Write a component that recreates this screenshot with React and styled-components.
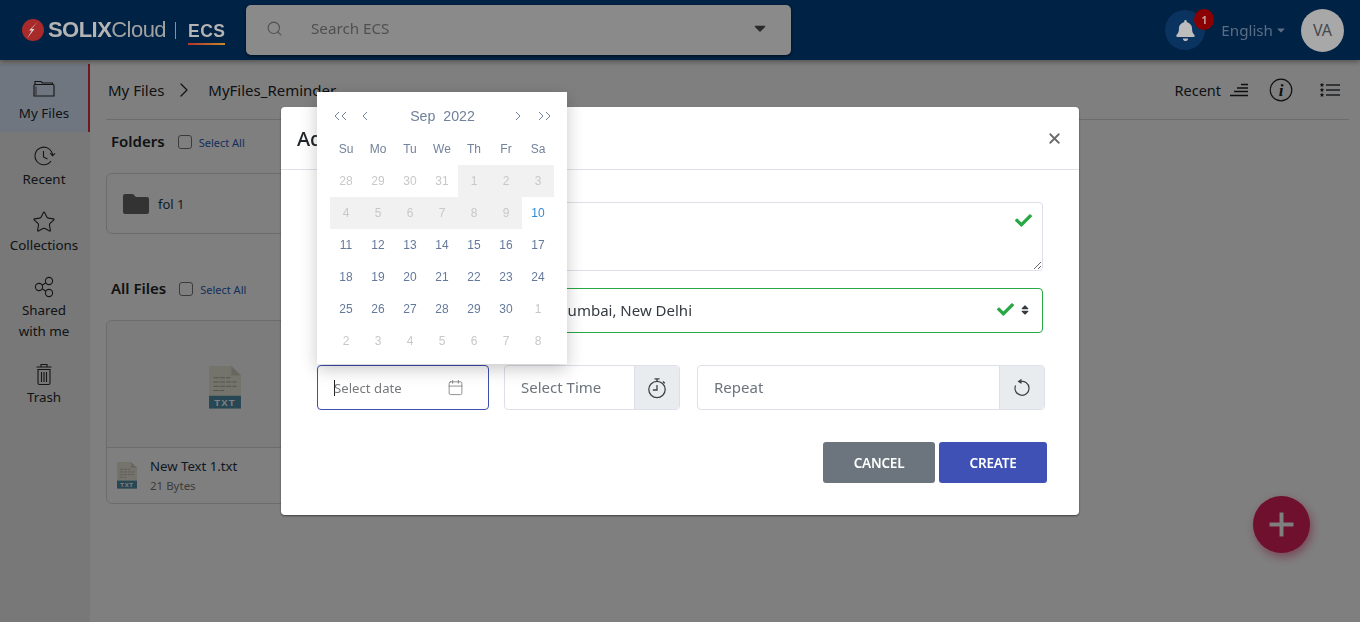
import React from 'react';
import styled, { createGlobalStyle } from 'styled-components';
import { Star, Search, ChevronRight, Calendar, Plus, X } from 'lucide-react';
import { FaBell, FaCheck, FaSort, FaCaretDown } from 'react-icons/fa';

const UI_FONT = `'Noto Sans', 'Open Sans', sans-serif`;

const GlobalStyle = createGlobalStyle`
  html, body { margin: 0; padding: 0; height: 100%; overflow: hidden; }
  body { font-family: ${UI_FONT}; background: #fff; color: #212529; }
  * { box-sizing: border-box; }
`;

const Page = styled.div`
  width: 1360px;
  height: 622px;
  overflow: hidden;
`;

/* header */
const TopBar = styled.header`
  position: relative;
  z-index: 30;
  height: 60px;
  background: #002244;
  display: flex;
  align-items: center;
  box-shadow: 0 2px 5px rgba(0, 0, 0, 0.35);
`;

const Logo = styled.div`
  width: 246px;
  padding-left: 22px;
  display: flex;
  align-items: center;
  color: #b4b4b4;
  flex: none;
`;

const LogoName = styled.span`
  margin-left: 4px;
  font-family: 'Liberation Sans', sans-serif;
  font-size: 22px;
  letter-spacing: -0.55px;
  font-weight: 700;
`;

const LogoCloud = styled.span`
  font-weight: 400;
  color: #a2a2a2;
`;

const LogoDivider = styled.span`
  width: 1px;
  height: 17px;
  margin: 0 12px 0 9px;
  background: #8b8f96;
`;

const LogoProduct = styled.span`
  font-family: 'Liberation Sans', sans-serif;
  font-size: 17.5px;
  font-weight: 700;
  letter-spacing: 0.5px;
  padding: 5px 0 1px;
  border-bottom: 2px solid;
  border-image: linear-gradient(90deg, #b5322a, #c98a2a) 1;
`;

const SearchBox = styled.div`
  width: 545px;
  height: 50px;
  background: #8a8a8a;
  border-radius: 5px;
  box-shadow: 0 1px 3px rgba(0, 0, 0, 0.6);
  display: flex;
  align-items: center;
  padding: 0 22px 4px 20px;
  color: #505050;
  font-size: 15.2px;
`;

const SearchText = styled.span`
  margin-left: 28px;
  flex: 1;
`;

const HeaderRight = styled.div`
  margin-left: auto;
  padding-right: 16px;
  display: flex;
  align-items: center;
`;

const BellWrap = styled.div`
  position: relative;
  width: 40px;
  height: 40px;
  border-radius: 50%;
  background: #0b3360;
  color: #bdbdbd;
  display: flex;
  align-items: center;
  justify-content: center;
`;

const Badge = styled.span`
  position: absolute;
  top: -1px;
  right: -9px;
  width: 20px;
  height: 21px;
  border-radius: 50%;
  background: #8b0000;
  color: #c9a0a0;
  font-size: 10px;
  font-weight: 700;
  display: flex;
  align-items: center;
  justify-content: center;
`;

const Lang = styled.div`
  margin: 0 14px 0 16px;
  display: flex;
  align-items: center;
  gap: 2px;
  color: #5b6d85;
  font-size: 15.2px;
`;

const Avatar = styled.div`
  width: 43px;
  height: 43px;
  border-radius: 50%;
  background: #a8a8a8;
  color: #45494e;
  font-size: 16px;
  display: flex;
  align-items: center;
  justify-content: center;
`;

/* page behind the dialog */
const Content = styled.div`
  display: flex;
  height: 562px;
`;

const Sidebar = styled.nav`
  width: 90px;
  flex: none;
  background: #f0f0f0;
  padding-top: 4px;
`;

const SideItem = styled.div`
  height: ${p => p.$height || 66}px;
  padding-top: ${p => p.$pad || 12}px;
  display: flex;
  flex-direction: column;
  align-items: center;
  text-align: center;
  font-size: 13.4px;
  line-height: 21px;
  color: #24292e;
  background: ${p => (p.$active ? '#dfecff' : 'transparent')};
  border-right: 2px solid ${p => (p.$active ? '#e03038' : 'transparent')};
  svg { margin-bottom: ${p => (p.$active ? 3 : 1)}px; flex: none; }
`;

const Main = styled.main`
  flex: 1;
  padding: 0 11px 0 16px;
`;

const CrumbBar = styled.div`
  height: 60px;
  border-bottom: 1px solid #d8d8d8;
  display: flex;
  align-items: center;
  padding: 0 9px 0 2px;
  font-size: 15px;
  color: #212529;
`;

const CrumbLink = styled.span`
  margin-right: 8px;
`;

const CrumbTail = styled.span`
  margin-left: 12px;
`;

const BarTools = styled.div`
  margin-left: auto;
  display: flex;
  align-items: center;
  font-size: 14.5px;
`;

const SectionHead = styled.div`
  display: flex;
  align-items: center;
  padding-left: 5px;
  height: 22px;
  margin-top: ${p => p.$top}px;
  font-size: 15px;
  font-weight: 600;
`;

const Check = styled.span`
  width: 14px;
  height: 14px;
  margin: 2px 7px 0 ${p => p.$left}px;
  background: #fff;
  border: 1px solid #767676;
  border-radius: 3px;
`;

const SelectAll = styled.span`
  margin-top: 2px;
  font-size: 11px;
  font-weight: 400;
  color: #2a5db8;
`;

const Card = styled.div`
  width: 260px;
  margin-top: ${p => p.$top}px;
  background: #fff;
  border: 1px solid #d8d8d8;
  border-radius: 6px;
`;

const FolderCard = styled(Card)`
  height: 61px;
  display: flex;
  align-items: center;
  padding-left: 16px;
  gap: 9px;
  font-size: 13px;
  color: #213a52;
`;

const Thumb = styled.div`
  height: 127px;
  background: #f8f8f8;
  border-bottom: 1px solid #d8d8d8;
  padding: 45px 0 0 102px;
  border-radius: 6px 6px 0 0;
`;

const FileRow = styled.div`
  height: 55px;
  display: flex;
  align-items: center;
  padding-left: 10px;
  gap: 13px;
`;

const FileName = styled.div`
  font-size: 13.2px;
  color: #1f3347;
  line-height: 20px;
`;

const FileSize = styled.div`
  font-size: 11.5px;
  color: #777;
  line-height: 20px;
`;

const Fab = styled.div`
  position: fixed;
  left: 1253px;
  top: 496px;
  width: 57px;
  height: 57px;
  border-radius: 50%;
  background: #e0205f;
  color: #fff;
  display: flex;
  align-items: center;
  justify-content: center;
  box-shadow: 2px 4px 10px rgba(224, 32, 95, 0.5);
`;

/* dialog */
const Backdrop = styled.div`
  position: fixed;
  inset: 0;
  z-index: 20;
  background: rgba(0, 0, 0, 0.5);
  padding: 107px 0 0 281px;
`;

const Modal = styled.div`
  width: 798px;
  height: 408px;
  background: #fff;
  border-radius: 4px;
  box-shadow: 0 1px 2px rgba(0, 0, 0, 0.5);
`;

const ModalHead = styled.div`
  height: 63px;
  border-bottom: 1px solid #dee2e6;
  display: flex;
  align-items: center;
  justify-content: space-between;
  padding: 0 16px;
  font-size: 20px;
  font-weight: 500;
  color: #212529;
`;

const CloseBtn = styled.span`
  color: #6a6a6a;
  display: flex;
`;

const ModalBody = styled.div`
  position: relative;
  padding: 32px 32px 32px 36px;
`;

const NoteWrap = styled.div`
  position: relative;
  margin-right: 4px;
  height: 69px;
`;

const Note = styled.textarea`
  display: block;
  width: 100%;
  height: 69px;
  border: 1px solid #dfdfec;
  border-radius: 4px;
  outline: none;
  resize: vertical;
`;

const OkMark = styled.span`
  position: absolute;
  right: ${p => p.$right}px;
  top: ${p => p.$top}px;
  color: #28a745;
  display: flex;
`;

const ZoneSelect = styled.div`
  position: relative;
  margin: 17px 4px 0 0;
  height: 45px;
  border: 1px solid #28a745;
  border-radius: 4px;
  padding: 0 0 2px 236px;
  display: flex;
  align-items: center;
  font-size: 15px;
  color: #343a40;
`;

const SortMark = styled.span`
  position: absolute;
  right: 11px;
  top: 15px;
  display: flex;
  color: #343a40;
`;

const PickerRow = styled.div`
  display: flex;
  margin: 32px 2px 0 0;
  height: 45px;
`;

const DateField = styled.div`
  position: relative;
  width: 172px;
  flex: none;
  border: 1px solid #3f4fae;
  border-radius: 4px;
  display: flex;
  align-items: center;
  justify-content: space-between;
  padding: 0 24px 0 16px;
  font-size: 13.2px;
  color: #77797c;
`;

const Caret = styled.span`
  width: 1px;
  height: 16px;
  margin-right: -1px;
  background: #222;
`;

const DateText = styled.span`
  flex: 1;
`;

const InputGroup = styled.div`
  display: flex;
  flex: ${p => (p.$grow ? '1' : 'none')};
  width: ${p => (p.$grow ? 'auto' : '176px')};
  margin-left: ${p => p.$left}px;
  border: 1px solid #dfdfec;
  border-radius: 4px;
  overflow: hidden;
`;

const GroupText = styled.div`
  flex: 1;
  padding: 0 0 2px 16px;
  display: flex;
  align-items: center;
  font-size: 15px;
  color: #6c757d;
`;

const GroupAddon = styled.div`
  width: 45px;
  background: #e9ecef;
  border-left: 1px solid #dfdfec;
  color: #495057;
  display: flex;
  align-items: center;
  justify-content: center;
`;

const Actions = styled.div`
  display: flex;
  justify-content: flex-end;
  gap: 4px;
  margin-top: 32px;
`;

const ActionBtn = styled.div`
  width: ${p => p.$width}px;
  height: 41px;
  border-radius: 3px;
  background: ${p => p.$bg};
  color: #fff;
  font-size: 13.5px;
  font-weight: 600;
  letter-spacing: -0.2px;
  display: flex;
  align-items: center;
  justify-content: center;
`;

/* date popup */
const Popup = styled.div`
  position: absolute;
  left: -1px;
  bottom: 45px;
  width: 250px;
  height: 272px;
  background: #fff;
  padding: 0 13px;
  font-family: 'Liberation Sans', Arial, sans-serif;
  box-shadow: 0 5px 16px rgba(0, 0, 0, 0.22);
`;

const PopupNav = styled.div`
  height: 48px;
  display: flex;
  align-items: center;
  padding: 0 3px;
  color: #6f819b;
`;

const NavGroup = styled.div`
  display: flex;
  align-items: center;
  gap: ${p => p.$gap}px;
`;

const MonthLabel = styled.div`
  flex: 1;
  text-align: center;
  white-space: pre;
  font-size: 14.2px;
  padding-left: 2px;
`;

const WeekRow = styled.div`
  display: grid;
  grid-template-columns: repeat(7, 32px);
  height: 18px;
  margin-bottom: 7px;
  align-items: center;
  text-align: center;
  font-size: 12px;
  color: #72839c;
`;

const DayGrid = styled.div`
  display: grid;
  grid-template-columns: repeat(7, 32px);
  grid-auto-rows: 32px;
`;

const Day = styled.div`
  display: flex;
  align-items: center;
  justify-content: center;
  font-size: 12px;
  color: ${p => (p.$kind === 'today' ? '#2b8be0' : p.$kind === 'off' || p.$kind === 'past' ? '#c8c8c8' : '#64799a')};
  background: ${p => (p.$kind === 'past' ? '#f1f1f1' : 'transparent')};
`;

const Chevrons = ({ dir, count }) => (
  <svg width={count === 2 ? 14 : 8} height="12" viewBox={`0 0 ${count === 2 ? 14 : 8} 12`} fill="none" stroke="currentColor" strokeWidth="1">
    {[...Array(count)].map((_, i) => (
      <path key={i} d={dir === 'left' ? `M${6 + i * 7} 2 L${2 + i * 7} 6 L${6 + i * 7} 10` : `M${2 + i * 7} 2 L${6 + i * 7} 6 L${2 + i * 7} 10`} />
    ))}
  </svg>
);

const FileIcon = ({ size }) => (
  <svg width={size} height={size * 1.33} viewBox="0 0 30 40">
    <path d="M0 0H21L30 9V40H0Z" fill="#e8e8d8" />
    <path d="M21 0L30 9H21Z" fill="#cfcfc0" />
    <path d="M4 11H20M4 15H26M4 19H26M4 23H14" stroke="#a8a89a" strokeWidth="1" strokeDasharray="5 1" />
    <rect y="28" width="30" height="12" fill="#4f8fa8" />
    <text x="15" y="37.5" fontSize="9" fontWeight="700" fontFamily="'Liberation Sans', sans-serif" letterSpacing="1" fill="#fff" textAnchor="middle">TXT</text>
  </svg>
);

const FolderLine = () => (
  <svg width="24" height="24" viewBox="0 0 24 24" fill="none" stroke="#2b2b2b" strokeWidth="1.1">
    <path d="M3 9V5.5H9L10.5 7H20.5V9" />
    <path d="M2 9.5Q2 8.5 3 8.5H21Q22 8.5 22 9.5V20H2Z" />
    <path d="M4 19V10.5" strokeWidth="0.8" />
  </svg>
);

const ClockArrow = () => (
  <svg width="24" height="24" viewBox="0 0 24 24" fill="none" stroke="#2b2b2b" strokeWidth="1.1">
    <path d="M19 17A8.8 8.8 0 1 1 20.6 11.5" />
    <path d="M18.2 9.2L20.6 11.8L23 9.4" />
    <path d="M11.5 7V13L15.5 15" />
  </svg>
);

const ShareNodes = () => (
  <svg width="24" height="24" viewBox="0 0 24 24" fill="none" stroke="#2b2b2b" strokeWidth="1.1">
    <circle cx="7" cy="12" r="3.6" />
    <circle cx="17" cy="6" r="3.6" />
    <circle cx="17" cy="18" r="3.6" />
    <path d="M10 10.2L14 7.8M10 13.8L14 16.2" />
  </svg>
);

const TrashCan = () => (
  <svg width="24" height="24" viewBox="0 0 24 24" fill="none" stroke="#2b2b2b" strokeWidth="1.1">
    <path d="M4.5 5H19.5M9 5V2.5H15V5" />
    <path d="M6 7.5H18V21Q18 22.5 16.5 22.5H7.5Q6 22.5 6 21Z" />
    <path d="M9.5 10V20M12 10V20M14.5 10V20" />
  </svg>
);

const Stopwatch = () => (
  <svg width="22" height="22" viewBox="0 0 22 22" fill="none" stroke="#3d4246" strokeWidth="1.3">
    <circle cx="11" cy="12.5" r="8.2" />
    <path d="M8.5 1.8H13.5M11 2V4.3M17 4.5L18.8 6.3" />
    <path d="M11 8V13H6.8" />
  </svg>
);

const ResetArrow = () => (
  <svg width="20" height="20" viewBox="0 0 20 20" fill="none" stroke="#3d4246" strokeWidth="1.2">
    <path d="M8 3.6A7 7 0 1 1 3.6 7.5" />
    <path d="M9.5 0.8V6L5.5 3.4Z" fill="#3d4246" stroke="none" />
  </svg>
);

const StairsIcon = () => (
  <svg width="20" height="14" viewBox="0 0 20 14" fill="none" stroke="#1d1f22" strokeWidth="1.5" style={{ marginLeft: 8 }}>
    <path d="M12 1.5H19M8 5H19M5 8.5H19M1 12.5H19" />
  </svg>
);

const InfoIcon = () => (
  <svg width="24" height="24" viewBox="0 0 24 24" fill="none" style={{ marginLeft: 20 }}>
    <circle cx="12" cy="12" r="10.8" stroke="#1d1f22" strokeWidth="1.2" />
    <text x="12" y="18" fontSize="17" fontWeight="700" fontStyle="italic" fontFamily="'Liberation Serif', serif" fill="#1d1f22" textAnchor="middle">i</text>
  </svg>
);

const StarList = () => (
  <svg width="20" height="16" viewBox="0 0 20 16" style={{ marginLeft: 27 }}>
    <path d="M6 3H20M6 8H20M6 13H20" stroke="#3a3c40" strokeWidth="1.4" />
    {[3, 8, 13].map(y => (
      <path key={y} d={`M2 ${y - 2.4}L2.7 ${y - 0.8}L4.2 ${y - 0.7}L3 ${y + 0.4}L3.4 ${y + 2}L2 ${y + 1.1}L0.6 ${y + 2}L1 ${y + 0.4}L-0.2 ${y - 0.7}L1.3 ${y - 0.8}Z`} fill="#1d1f22" />
    ))}
  </svg>
);

const week = ['Su', 'Mo', 'Tu', 'We', 'Th', 'Fr', 'Sa'];
const days = [
  ['28', 'off'], ['29', 'off'], ['30', 'off'], ['31', 'off'], ['1', 'past'], ['2', 'past'], ['3', 'past'],
  ['4', 'past'], ['5', 'past'], ['6', 'past'], ['7', 'past'], ['8', 'past'], ['9', 'past'], ['10', 'today'],
  ['11'], ['12'], ['13'], ['14'], ['15'], ['16'], ['17'],
  ['18'], ['19'], ['20'], ['21'], ['22'], ['23'], ['24'],
  ['25'], ['26'], ['27'], ['28'], ['29'], ['30'], ['1', 'off'],
  ['2', 'off'], ['3', 'off'], ['4', 'off'], ['5', 'off'], ['6', 'off'], ['7', 'off'], ['8', 'off'],
];

export default function App() {
  return (
    <Page>
      <GlobalStyle />
      <TopBar>
        <Logo>
          <svg width="22" height="22" viewBox="0 0 22 22">
            <circle cx="11" cy="11" r="11" fill="#a82a2a" />
            <path d="M16 2.5L9.5 10H12.5L5 19.5L9.8 11.5H7Z" fill="#d8d8d8" />
          </svg>
          <LogoName>SOLIX<LogoCloud>Cloud</LogoCloud></LogoName>
          <LogoDivider />
          <LogoProduct>ECS</LogoProduct>
        </Logo>
        <SearchBox>
          <Search size={17} strokeWidth={1.5} />
          <SearchText>Search ECS</SearchText>
          <FaCaretDown size={18} color="#2a2a2a" />
        </SearchBox>
        <HeaderRight>
          <BellWrap>
            <FaBell size={21} />
            <Badge>1</Badge>
          </BellWrap>
          <Lang>English<FaCaretDown size={12} /></Lang>
          <Avatar>VA</Avatar>
        </HeaderRight>
      </TopBar>

      <Content>
        <Sidebar>
          <SideItem $active $height={68}>
            <FolderLine />
            My Files
          </SideItem>
          <SideItem>
            <ClockArrow />
            Recent
          </SideItem>
          <SideItem>
            <Star size={24} strokeWidth={1.1} />
            Collections
          </SideItem>
          <SideItem $height={87} $pad={11}>
            <ShareNodes />
            Shared
            <br />
            with me
          </SideItem>
          <SideItem $pad={11}>
            <TrashCan />
            Trash
          </SideItem>
        </Sidebar>

        <Main>
          <CrumbBar>
            <CrumbLink>My Files</CrumbLink>
            <ChevronRight size={24} strokeWidth={1.25} />
            <CrumbTail>MyFiles_Reminder</CrumbTail>
            <BarTools>
              Recent
              <StairsIcon />
              <InfoIcon />
              <StarList />
            </BarTools>
          </CrumbBar>

          <SectionHead $top={10}>
            Folders
            <Check $left={13} />
            <SelectAll>Select All</SelectAll>
          </SectionHead>
          <FolderCard $top={21}>
            <svg width="26" height="20" viewBox="0 0 26 20">
              <path d="M0 2Q0 0 2 0H10L13 3H24Q26 3 26 5V18Q26 20 24 20H2Q0 20 0 18Z" fill="#666" />
            </svg>
            fol 1
          </FolderCard>

          <SectionHead $top={43}>
            All Files
            <Check $left={13} />
            <SelectAll>Select All</SelectAll>
          </SectionHead>
          <Card $top={21}>
            <Thumb>
              <FileIcon size={32} />
            </Thumb>
            <FileRow>
              <FileIcon size={20} />
              <div>
                <FileName>New Text 1.txt</FileName>
                <FileSize>21 Bytes</FileSize>
              </div>
            </FileRow>
          </Card>
        </Main>
      </Content>

      <Fab><Plus size={41} strokeWidth={2.3} strokeLinecap="butt" /></Fab>

      <Backdrop>
        <Modal>
          <ModalHead>
            Add
            <CloseBtn><X size={17} strokeWidth={2.5} /></CloseBtn>
          </ModalHead>
          <ModalBody>
            <NoteWrap>
              <Note />
              <OkMark $right={11} $top={10}><FaCheck size={17} /></OkMark>
            </NoteWrap>
            <ZoneSelect>
              Mumbai, New Delhi
              <OkMark $right={28} $top={12}><FaCheck size={17} /></OkMark>
              <SortMark><FaSort size={12} /></SortMark>
            </ZoneSelect>
            <PickerRow>
              <DateField>
                <Caret />
                <DateText>Select date</DateText>
                <Calendar size={17} strokeWidth={1} color="#666" />
                <Popup>
                  <PopupNav>
                    <NavGroup $gap={14}>
                      <Chevrons dir="left" count={2} />
                      <Chevrons dir="left" count={1} />
                    </NavGroup>
                    <MonthLabel>{'Sep  2022'}</MonthLabel>
                    <NavGroup $gap={15}>
                      <Chevrons dir="right" count={1} />
                      <Chevrons dir="right" count={2} />
                    </NavGroup>
                  </PopupNav>
                  <WeekRow>
                    {week.map(w => <span key={w}>{w}</span>)}
                  </WeekRow>
                  <DayGrid>
                    {days.map(([label, kind], i) => (
                      <Day key={i} $kind={kind}>{label}</Day>
                    ))}
                  </DayGrid>
                </Popup>
              </DateField>
              <InputGroup $left={15}>
                <GroupText>Select Time</GroupText>
                <GroupAddon><Stopwatch /></GroupAddon>
              </InputGroup>
              <InputGroup $left={17} $grow>
                <GroupText>Repeat</GroupText>
                <GroupAddon><ResetArrow /></GroupAddon>
              </InputGroup>
            </PickerRow>
            <Actions>
              <ActionBtn $width={112} $bg="#6c757d">CANCEL</ActionBtn>
              <ActionBtn $width={108} $bg="#3f51b5">CREATE</ActionBtn>
            </Actions>
          </ModalBody>
        </Modal>
      </Backdrop>
    </Page>
  );
}
